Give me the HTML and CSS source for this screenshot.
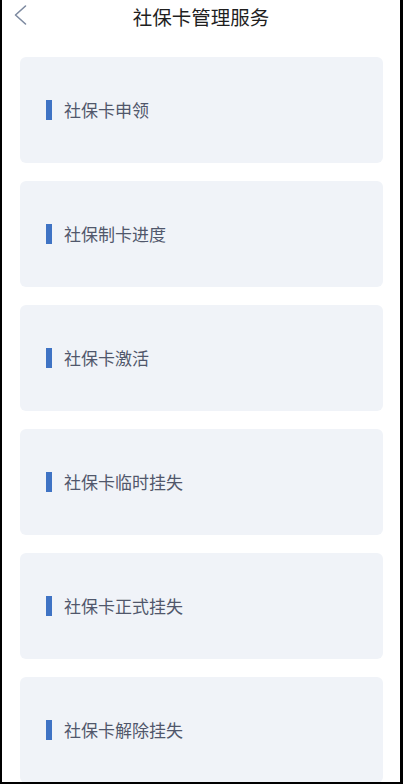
FILE: index.html
```html
<!DOCTYPE html>
<html lang="zh-CN">
<head>
<meta charset="utf-8">
<title>社保卡管理服务</title>
<link rel="stylesheet" href="styles.css">
</head>
<body>
<div class="frame">
  <header class="nav">
    <span class="back" aria-label="返回">
      <svg width="16" height="22" viewBox="0 0 16 22"><polyline points="12.5,2 2.5,11 12.5,20" fill="none" stroke="#7d8aa0" stroke-width="1.6" stroke-linecap="round" stroke-linejoin="round"/></svg>
    </span>
    <h1 class="title">社保卡管理服务</h1>
  </header>
  <main class="list">
    <div class="card"><span class="bar"></span><span class="label">社保卡申领</span></div>
    <div class="card"><span class="bar"></span><span class="label">社保制卡进度</span></div>
    <div class="card"><span class="bar"></span><span class="label">社保卡激活</span></div>
    <div class="card"><span class="bar"></span><span class="label">社保卡临时挂失</span></div>
    <div class="card"><span class="bar"></span><span class="label">社保卡正式挂失</span></div>
    <div class="card"><span class="bar"></span><span class="label">社保卡解除挂失</span></div>
  </main>
</div>
</body>
</html>
```

FILE: styles.css
```css
html, body {
  margin: 0;
  padding: 0;
  background: #000;
}
.frame {
  box-sizing: border-box;
  width: 403px;
  height: 784px;
  background: #fff;
  border-left: 2px solid #000;
  border-right: 3px solid #000;
  border-bottom: 2px solid #000;
  overflow: hidden;
  font-family: "Noto Sans CJK SC", "Noto Sans", sans-serif;
}
.nav {
  position: relative;
  height: 34px;
  display: flex;
  align-items: center;
  justify-content: center;
}
.back {
  position: absolute;
  left: 11px;
  top: 4px;
  display: flex;
}
.title {
  margin: 0;
  font-size: 19.5px;
  font-weight: 400;
  color: #1f1f1f;
  line-height: 34px;
}
.list {
  display: flex;
  flex-direction: column;
  gap: 18px;
  padding: 23px 17px 0 18px;
}
.card {
  flex: none;
  height: 106px;
  background: #f0f3f8;
  border-radius: 6px;
  display: flex;
  align-items: center;
  padding-left: 26px;
  gap: 12px;
}
.bar {
  width: 6px;
  height: 20px;
  background: #3f73c4;
}
.label {
  font-size: 17px;
  color: #50576b;
  line-height: 20px;
}
```
